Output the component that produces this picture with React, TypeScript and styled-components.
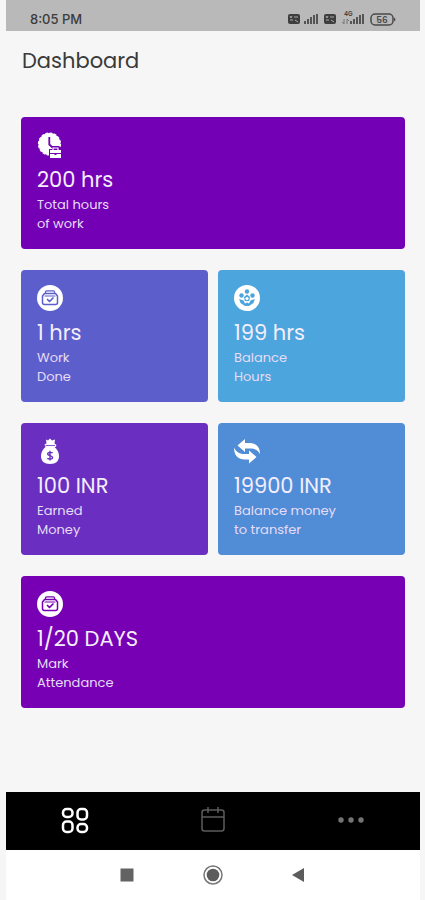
import React from "react";
import styled, { createGlobalStyle } from "styled-components";

const GlobalStyle = createGlobalStyle`
  *, *::before, *::after { box-sizing: border-box; }
  body {
    margin: 0;
    background: #f6f6f6;
    font-family: Poppins, Inter, "Open Sans", sans-serif;
  }
`;

const Screen = styled.div`
  display: flex;
  flex-direction: column;
  min-height: 100vh;
  padding: 0 5px 0 6px;
  background: #f6f6f6;
`;

const StatusBar = styled.header`
  display: flex;
  align-items: flex-end;
  justify-content: space-between;
  height: 31px;
  padding: 0 23px 4px 24px;
  background: #b9b9b9;
  color: #3c3c3c;
`;

const Clock = styled.time`
  font-family: Inter, sans-serif;
  font-size: 13px;
  line-height: 15px;
  font-weight: 500;
`;

const StatusIcons = styled.svg`
  display: block;
  width: 110px;
  height: 16px;
`;

const Content = styled.main`
  flex: 1;
  padding: 14px 15px 24px;
`;

const Title = styled.h1`
  margin: 0 1px 40px;
  color: #3a3a3a;
  font-size: 21px;
  line-height: 32px;
  font-weight: 400;
`;

const CardGrid = styled.section`
  display: grid;
  grid-template-columns: 1fr 1fr;
  gap: 21px 10px;
`;

const Card = styled.article<{ $color: string; $wide?: boolean }>`
  grid-column: ${({ $wide }) => ($wide ? "1 / -1" : "auto")};
  padding: 15px 16px 16px;
  border-radius: 4px;
  background: ${({ $color }) => $color};
  color: #fff;
`;

const CardIcon = styled.svg`
  display: block;
  width: 26px;
  height: 26px;
  margin-bottom: 6px;
`;

const Value = styled.h2`
  margin: 0;
  color: #f4eefc;
  font-size: 21px;
  line-height: 31px;
  font-weight: 400;
`;

const Label = styled.p`
  margin: 0;
  color: #e6dcf6;
  font-size: 13px;
  line-height: 19px;
  white-space: pre-line;
`;

const TabBar = styled.nav`
  display: grid;
  grid-template-columns: repeat(3, 1fr);
  height: 58px;
  background: #000;
`;

const TabButton = styled.button<{ $active?: boolean }>`
  display: flex;
  align-items: center;
  justify-content: center;
  padding: 0;
  border: 0;
  background: none;
  color: ${({ $active }) => ($active ? "#fff" : "#5c5c5c")};
  cursor: pointer;
`;

const TabIcon = styled.svg`
  width: 30px;
  height: 30px;
`;

const SystemBar = styled.footer`
  display: flex;
  align-items: center;
  justify-content: center;
  gap: 56px;
  height: 50px;
  background: #fff;
`;

const SystemButton = styled.button`
  display: flex;
  padding: 0;
  border: 0;
  background: none;
  cursor: pointer;
`;

const SystemIcon = styled.svg`
  width: 30px;
  height: 24px;
`;

type IconName = "clock" | "case" | "people" | "bag" | "transfer";

const CaseDrawing = ({ color }: { color: string }) => (
  <>
    <circle cx="13" cy="13" r="13" fill="#fff" />
    <g fill="none" stroke={color} strokeLinejoin="round" strokeLinecap="round">
      <path d="M8.500 8V7Q8.500 5.800 9.700 5.800H16.300Q17.500 5.800 17.500 7V8" strokeWidth="1.200" />
      <path d="M7.500 8.500H18.500L20.500 11V17.500Q20.500 19.500 18.500 19.500H7.500Q5.500 19.500 5.500 17.500V11Z" strokeWidth="1.500" />
      <path d="M8 11H18" strokeWidth="1.200" />
      <path d="M10.500 14.500L12.500 16.500L16 13" strokeWidth="1.700" />
    </g>
  </>
);

const PeopleDrawing = ({ color }: { color: string }) => (
  <>
    <circle cx="13" cy="13" r="13" fill="#fff" />
    <g fill={color}>
      <circle cx="13" cy="6.500" r="2.200" />
      <circle cx="7.500" cy="10.500" r="2.200" />
      <circle cx="18.500" cy="10.500" r="2.200" />
      <path d="M13 9.500L16 12L15.200 16H10.800L10 12Z" />
      <path d="M5.200 14L9.500 15.500L11 18.500L13 17.500L15 18.500L16.500 15.500L20.800 14L19.500 18L15 21H11L6.500 18Z" />
    </g>
    <circle cx="13" cy="13.500" r="1.600" fill="#fff" />
  </>
);

const ClockDrawing = ({ color }: { color: string }) => (
  <>
    <circle cx="12.500" cy="12" r="11" fill="#fff" />
    <circle cx="12.500" cy="12" r="11" fill="none" stroke="#fff" strokeWidth="1.200" strokeDasharray="2.800 1.500" />
    <path d="M12.300 5V12.500L15.500 15.500" fill="none" stroke={color} strokeWidth="1.800" />
    <path d="M12 17H15V14H22L26 17V26H12Z" fill={color} />
    <path d="M13 18H24V21H13ZM13 22H17.500V23H19.500V22H24V26H13Z" fill="#fff" />
    <path d="M16 18V16H21V18" fill="none" stroke="#fff" strokeWidth="1.200" />
  </>
);

const BagDrawing = ({ color }: { color: string }) => (
  <>
    <path d="M9 1.500L11 2.500L13 0.500L15 2.500L18 1.500L17.500 5.500L19.500 7L18.500 9H8.500L7.500 6.500L9.500 5.500Z" fill="#fff" />
    <path d="M9 8.500H17C20 11 22 14 22 18C22 23 19 26 13 26C7 26 4 23 4 18C4 14 6 11 9 8.500Z" fill="#fff" />
    <path d="M8.500 7.500H18" stroke={color} strokeWidth="0.800" />
    <path d="M15.500 15.200C14.800 13.900 10.500 14 10.700 16.100C10.900 18 15.500 17.200 15.500 19.500C15.500 21.600 11.100 21.500 10.500 19.900M13 12.800V22.600" fill="none" stroke={color} strokeWidth="1.400" />
  </>
);

const TransferDrawing = () => (
  <>
    <path d="M3.500 7.500L11 1V5H15C22 5 26 9 26 16C24 12.500 21 10.500 16 10.500H11V14Z" fill="#fff" />
    <path d="M22.500 19L15 25.500V21.500H11C4 21.500 0 17.500 0 9.500C2 13.500 5 16 10 16H15V12.500Z" fill="#fff" />
  </>
);

const drawings: Record<IconName, React.ComponentType<{ color: string }>> = {
  clock: ClockDrawing,
  case: CaseDrawing,
  people: PeopleDrawing,
  bag: BagDrawing,
  transfer: TransferDrawing,
};

interface Stat {
  icon: IconName;
  value: string;
  label: string;
  color: string;
  wide?: boolean;
}

const stats: Stat[] = [
  { icon: "clock", value: "200 hrs", label: "Total hours\nof work", color: "#7300b5", wide: true },
  { icon: "case", value: "1 hrs", label: "Work\nDone", color: "#5c5fcb" },
  { icon: "people", value: "199 hrs", label: "Balance\nHours", color: "#4ca5dc" },
  { icon: "bag", value: "100 INR", label: "Earned\nMoney", color: "#6a2fc1" },
  { icon: "transfer", value: "19900 INR", label: "Balance money\nto transfer", color: "#518dd7" },
  { icon: "case", value: "1/20 DAYS", label: "Mark\nAttendance", color: "#7700b5", wide: true },
];

const SignalBars = ({ x }: { x: number }) => (
  <path
    d={`M${x} 13v-3h2v3zM${x + 3} 13v-5h2v5zM${x + 6} 13v-7h2v7zM${x + 9} 13v-9h2v9zM${x + 12} 13v-10h2v10z`}
    fill="#555"
  />
);

const VolteBadge = ({ x }: { x: number }) => (
  <>
    <rect x={x} y="3" width="12" height="10" rx="2" fill="#3e3e3e" />
    <path d={`M${x + 2} 5l1 2l1 -2M${x + 6} 6h4M${x + 2} 9h3M${x + 7} 9l3 2`} fill="none" stroke="#aaa" />
  </>
);

export default function App() {
  return (
    <>
      <GlobalStyle />
      <Screen>
        <StatusBar>
          <Clock>8:05 PM</Clock>
          <StatusIcons viewBox="0 0 110 16" role="img" aria-label="Signal and battery 56%">
            <VolteBadge x={1} />
            <SignalBars x={17} />
            <VolteBadge x={37} />
            <text x="57" y="5" fontSize="6" fontWeight="600" fill="#444">4G</text>
            <path d="M57 8v5M55 11l2 2M60 13v-5l2 2" fill="none" stroke="#777" />
            <path d="M63 13v-3h2v3zM66 13v-5h2v5zM69 13v-7h2v7zM72 13v-9h2v9zM75 13v-10h2v10z" fill="#555" />
            <rect x="84" y="3" width="22" height="11" rx="4" fill="none" stroke="#4a4a4a" strokeWidth="1.500" />
            <path d="M107 6.500Q110 8.500 107 10.500Z" fill="#4a4a4a" />
            <text x="95" y="12" fontSize="9" fontWeight="600" textAnchor="middle" fill="#4a4a4a">56</text>
          </StatusIcons>
        </StatusBar>

        <Content>
          <Title>Dashboard</Title>
          <CardGrid>
            {stats.map(({ icon, value, label, color, wide }) => {
              const Drawing = drawings[icon];
              return (
                <Card key={value} $color={color} $wide={wide}>
                  <CardIcon viewBox="0 0 26 26" aria-hidden="true">
                    <Drawing color={color} />
                  </CardIcon>
                  <Value>{value}</Value>
                  <Label>{label}</Label>
                </Card>
              );
            })}
          </CardGrid>
        </Content>

        <TabBar aria-label="Main">
          <TabButton $active aria-label="Dashboard" aria-current="page">
            <TabIcon viewBox="0 0 30 30" fill="none" stroke="currentColor" strokeWidth="2.500">
              <rect x="3" y="3" width="9.500" height="8" rx="3.500" />
              <rect x="17.500" y="3" width="9.500" height="10.500" rx="3.500" />
              <rect x="3" y="15.500" width="9.500" height="10.500" rx="3.500" />
              <rect x="17.500" y="18" width="9.500" height="8" rx="3.500" />
            </TabIcon>
          </TabButton>
          <TabButton aria-label="Calendar">
            <TabIcon viewBox="0 0 30 30" fill="none" stroke="currentColor" strokeWidth="1.500">
              <rect x="4" y="4" width="22" height="21" rx="2.500" />
              <path d="M4 11H26M10 1V7M20 1V7" />
            </TabIcon>
          </TabButton>
          <TabButton aria-label="More">
            <TabIcon viewBox="0 0 30 30" fill="#747474">
              <circle cx="5" cy="14" r="2.700" />
              <circle cx="15" cy="14" r="2.700" />
              <circle cx="25" cy="14" r="2.700" />
            </TabIcon>
          </TabButton>
        </TabBar>

        <SystemBar>
          <SystemButton aria-label="Recent apps">
            <SystemIcon viewBox="0 0 30 24">
              <rect x="8.500" y="5.500" width="13" height="13" fill="#636363" />
            </SystemIcon>
          </SystemButton>
          <SystemButton aria-label="Home">
            <SystemIcon viewBox="0 0 30 24">
              <circle cx="15" cy="12" r="9" fill="none" stroke="#777" strokeWidth="1.500" />
              <circle cx="15" cy="12" r="6.300" fill="#5c5c5c" />
            </SystemIcon>
          </SystemButton>
          <SystemButton aria-label="Back">
            <SystemIcon viewBox="0 0 30 24">
              <path d="M8 12L20 5V19Z" fill="#5c5c5c" />
            </SystemIcon>
          </SystemButton>
        </SystemBar>
      </Screen>
    </>
  );
}
